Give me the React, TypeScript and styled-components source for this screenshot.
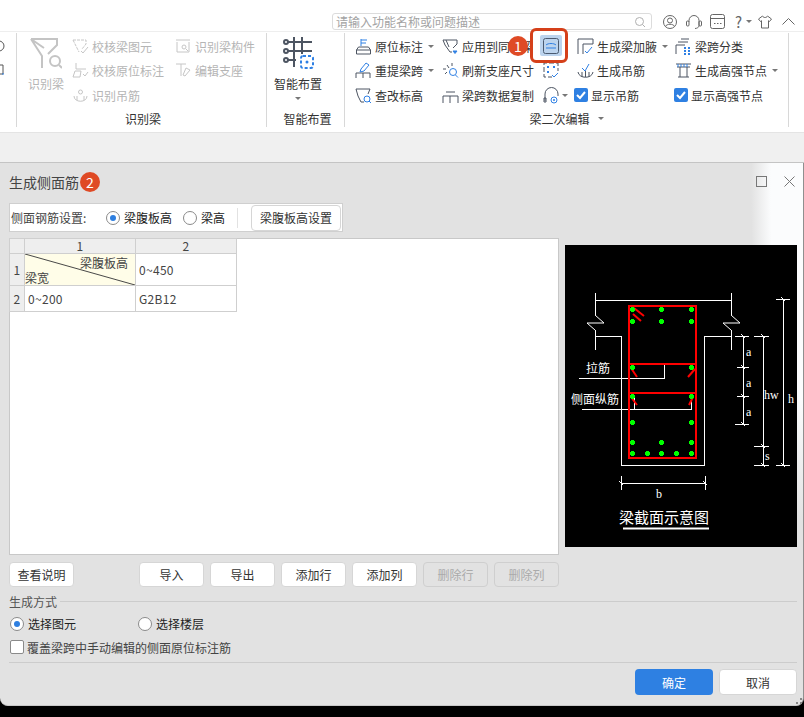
import React from "react";
import styled, { createGlobalStyle } from "styled-components";

const Global = createGlobalStyle`
  html, body { margin: 0; padding: 0; background: #000; }
  body { width: 804px; height: 717px; overflow: hidden; font-family: "Noto Sans CJK SC", "Noto Sans", sans-serif; font-size: 12px; color: #333; }
  * { box-sizing: border-box; }
`;

const Page = styled.div`
  width: 804px; height: 717px; display: flex; flex-direction: column; background: #000; overflow: hidden;
`;
const Ribbon = styled.div`
  height: 133px; background: #fff; border-bottom: 1px solid #e4e4e4; display: flex; flex-direction: column; flex: none;
`;
const TopBar = styled.div`
  height: 32px; border-bottom: 1px solid #eeeeee; display: flex; align-items: flex-start; padding: 13px 0 0 332px; flex: none;
`;
const Search = styled.div`
  width: 320px; height: 17px; border: 1px solid #dcdcdc; border-radius: 3px; display: flex; align-items: center; justify-content: space-between;
  padding: 0 5px 0 3px; color: #a3a3a3; font-size: 12px; line-height: 15px;
`;
const TopIcons = styled.div`
  display: flex; align-items: center; height: 17px; color: #666;
`;
const TopIcon = styled.svg<{ $ml: number }>`
  margin-left: ${p => p.$ml}px; flex: none; fill: none; stroke: #666;
`;
const Help = styled.span`
  margin-left: 10px; width: 9px; font-size: 15px; line-height: 16px; color: #666;
`;
const Groups = styled.div`
  flex: 1; display: flex; padding-top: 1px;
`;
const Group = styled.div<{ $w: number }>`
  width: ${p => p.$w}px; height: 94px; border-right: 1px solid #d8d8d8; display: flex; flex-direction: column; position: relative; flex: none;
`;
const GroupBody = styled.div<{ $left?: number }>`
  height: 77px; flex: none; display: flex; padding: 1px 0 0 ${p => p.$left ?? 0}px;
`;
const GroupTitle = styled.div<{ $pad?: number }>`
  flex: 1; display: flex; align-items: center; justify-content: center; gap: 6px; font-size: 12px; color: #333; padding-left: ${p => p.$pad ?? 0}px;
`;
const Col = styled.div<{ $w: number }>`
  width: ${p => p.$w}px; flex: none; display: flex; flex-direction: column;
`;
const Item = styled.div<{ $off?: boolean; $shift?: number }>`
  height: 24px; flex: none; display: flex; align-items: center; gap: 3px; white-space: nowrap; font-size: 12px;
  margin-left: ${p => p.$shift ?? 0}px;
  color: ${p => (p.$off ? "#b5b5b5" : "#333")};
  &:nth-child(3) { margin-top: 1px; }
`;
const Caret = styled.span`
  width: 0; height: 0; flex: none; margin-left: 2px; border-left: 3px solid transparent; border-right: 3px solid transparent; border-top: 3px solid #777;
`;
const BigCaret = styled(Caret)`
  margin: 5px 0 0 0;
`;
const EarCaret = styled(Caret)`
  margin-left: -1px;
`;
const BigTool = styled.div<{ $off?: boolean }>`
  display: flex; flex-direction: column; align-items: center; padding-top: 3px; color: ${p => (p.$off ? "#b5b5b5" : "#333")}; font-size: 12px; line-height: 16px;
  svg { flex: none; margin-bottom: 7px; }
`;
const Badge = styled.span`
  width: 20px; height: 20px; border-radius: 50%; background: #df4a25; color: #fff; font-size: 14px; line-height: 20px; text-align: center; display: inline-block; flex: none;
`;
const Badge1 = styled(Badge)`
  position: absolute; left: 163px; top: 3px;
`;
const Highlight = styled.div`
  position: absolute; left: 185px; top: -5px; width: 38px; height: 35px; border: 3px solid #d5401a; border-radius: 6px; background: #fff; display: flex; align-items: center; justify-content: center; padding-left: 4px;
`;
const HighlightFill = styled.div`
  width: 22px; height: 21px; background: #bcd4ee; border-radius: 2px; display: flex; align-items: center; justify-content: center;
`;
const Clip = styled.div`
  position: relative; height: 77px; flex: none;
`;
const Strip = styled.div`
  height: 30px; background: #f0f0f0; border-bottom: 1px solid #c4c4c4; flex: none;
`;
const Dialog = styled.div`
  height: 543px; padding: 0 9px 0 9px; border-radius: 0 0 8px 8px; display: flex; flex-direction: column; position: relative; flex: none; border-bottom: 1px solid #c8c8c8; border-right: 1px solid #8f8f8f;
  background:
    radial-gradient(ellipse 52px 330px at 803px 30px, #fbfcfd 62%, rgba(251, 252, 253, 0) 100%),
    #e2e2e2;
`;
const TitleRow = styled.div`
  height: 40px; flex: none; display: flex; align-items: center; gap: 1px; padding-bottom: 2px; font-size: 14px; color: #444;
`;
const WinBtns = styled.div`
  margin-left: auto; margin-right: -1px; display: flex; gap: 17px; align-items: center; margin-top: -1px;
`;
const SettingBar = styled.div`
  height: 29px; width: 334px; flex: none; background: #fff; border: 1px solid #cfcfcf; display: flex; align-items: center; padding-left: 1px; font-size: 12px; color: #333;
`;
const SettingLabel = styled.span`
  color: #444; width: 95px; flex: none;
`;
const Choice = styled.label<{ $w?: number }>`
  display: flex; align-items: center; gap: 4px; font-size: 12px; color: #222; width: ${p => (p.$w ? `${p.$w}px` : "auto")}; flex: none;
`;
const Radio = styled.span<{ $on?: boolean }>`
  width: 14px; height: 14px; border-radius: 50%; border: 1px solid #8a8a8a; background: #fff; display: flex; align-items: center; justify-content: center; flex: none;
  &::after { content: ""; width: 6px; height: 6px; border-radius: 50%; background: ${p => (p.$on ? "#2e7fe0" : "transparent")}; }
`;
const VSep = styled.span`
  width: 1px; height: 20px; background: #e2e2e2; margin: 0 13px 0 0; flex: none;
`;
const Btn = styled.button<{ $w: number; $off?: boolean }>`
  width: ${p => p.$w}px; height: 26px; padding: 0; font: inherit; font-size: 12px; flex: none; border-radius: 4px;
  background: ${p => (p.$off ? "transparent" : "#fff")}; border: 1px solid ${p => (p.$off ? "#cfcfcf" : "#d6d6d6")}; color: ${p => (p.$off ? "#aaa" : "#333")};
`;
const Content = styled.div`
  display: flex; margin-top: 6px; height: 317px; flex: none; gap: 6px;
`;
const GridPanel = styled.div`
  width: 550px; height: 317px; background: #fff; border: 1px solid #c8c8c8; flex: none;
`;
const Table = styled.table`
  border-collapse: collapse; table-layout: fixed; width: 227px; font-size: 12px; color: #444; margin-left: -1px; margin-top: -1px; letter-spacing: 0.3px;
  td, th { border: 1px solid #cfcfcf; padding: 0 3px; font-weight: 400; }
`;
const FirstCol = styled.col`
  width: 15px;
`;
const WideCol = styled.col`
  width: 111px;
`;
const LastCol = styled.col`
  width: 101px;
`;
const HeadCell = styled.th`
  background: #eeeeee; text-align: center; height: 15px; line-height: 14px; color: #444;
`;
const NumCell = styled.th`
  background: #eeeeee; text-align: center; padding: 0 !important;
`;
const DataCell = styled.td<{ $h: number }>`
  height: ${p => p.$h}px; color: #444;
`;
const DiagCell = styled.td`
  height: 32px; padding: 0 !important; background: #fffde8; position: relative; letter-spacing: 0;
`;
const DiagTop = styled.span`
  position: absolute; right: 7px; top: 0; line-height: 17px; color: #444;
`;
const DiagBottom = styled.span`
  position: absolute; left: 0; bottom: 0; line-height: 15px; color: #444;
`;
const DiagLine = styled.svg`
  position: absolute; inset: 0; width: 100%; height: 100%;
`;
const Picture = styled.svg`
  width: 232px; height: 302px; margin-top: 7px; background: #000; flex: none; display: block;
`;
const ActionRow = styled.div`
  display: flex; height: 25px; flex: none; margin-top: 7px; gap: 6px;
  button { height: 25px; }
`;
const Spacer = styled.div`
  width: 53px; flex: none;
`;
const Section = styled.div`
  display: flex; align-items: center; gap: 3px; margin-top: 5px; height: 18px; flex: none; color: #555; font-size: 12px;
  &::after { content: ""; flex: 1; height: 1px; background: #cccccc; margin-right: -3px; }
`;
const RadioRow = styled.div`
  display: flex; align-items: center; height: 23px; flex: none; margin-top: 2px; padding-left: 1px;
`;
const CheckRow = styled.div`
  display: flex; align-items: center; gap: 3px; height: 22px; flex: none; margin-top: 1px; padding-left: 1px; color: #444;
`;
const CheckBox = styled.span`
  width: 14px; height: 14px; border: 1px solid #8a8a8a; border-radius: 2px; background: #fff; flex: none;
`;
const Rule = styled.div`
  height: 1px; background: #cccccc; margin: 4px -3px 0 0; flex: none;
`;
const Footer = styled.div`
  display: flex; justify-content: flex-end; gap: 6px; margin-top: 6px; margin-right: -3px;
`;
const Primary = styled.button`
  width: 78px; height: 26px; border: 0; padding: 0; border-radius: 4px; background: #2e80e2; color: #fff; font: inherit; font-size: 12px;
`;
const Cancel = styled.button`
  width: 78px; height: 26px; border: 1px solid #d6d6d6; padding: 0; border-radius: 4px; background: #fff; color: #333; font: inherit; font-size: 12px;
`;
const Grip = styled.svg`
  position: absolute; right: 1px; bottom: 1px;
`;
const IconWrap = styled.span<{ $c?: string }>`
  display: flex; flex: none; color: ${p => p.$c ?? "#4d5562"};
`;
const EdgeGlyph = styled.div`
  height: 24px; display: flex; align-items: center;
`;
const BlueBox = styled.svg`
  flex: none;
`;

const gray = "#4d5562";
const blue = "#2f80e4";

const I = ({ children, off }: { children: React.ReactNode; off?: boolean }) => (
  <IconWrap $c={off ? "#c6c6c6" : gray}>
    <svg width="17" height="17" viewBox="0 0 17 17" fill="none" stroke="currentColor" strokeWidth="1">
      {children}
    </svg>
  </IconWrap>
);

const Ic = {
  mark: () => <I><path d="M6 1v7M6 2h6M6 5h5" stroke={blue} /><path d="M1.5 16v-4l2-3h10l2 3v4zM1.5 12h14" /></I>,
  apply: () => <I><path d="M1 2h14v4l-4 4M1 2l2 5 5 7h2" /><path d="M4 2l3 7" /><path stroke={blue} fill={blue} d="M11 13h4l-2 2.5z" /></I>,
  pen: () => <I><path d="M1 16v-5h14v5M8 16v-5" /><path stroke={blue} d="M5 10l1-3 5-6 3 2-5 6z" /></I>,
  refresh: () => <I><path d="M1 7h3M5 3l2 3M10 1v3M3 12l2-2" /><circle cx="11" cy="10" r="3.5" stroke={blue} /><path stroke={blue} d="M13.5 13l2.5 2.5" /></I>,
  chk: () => <I><path d="M1 2h14l-2 5M1 2l2 7 3 6h3" /><circle cx="12" cy="12" r="3" stroke={blue} /><path stroke={blue} d="M14 14l2 2" /></I>,
  span: () => <I><path d="M1 16V9h15v7M4 5h9M8 16V9" /></I>,
  haunch: () => <I><path d="M1 16V1h15v5H6v10" /><path stroke={blue} d="M8 13l2 2 5-6" /></I>,
  hang: () => <I><path d="M1 10c1 7 14 7 15 0M5 15v-5M12 15v-5M8.5 15V9" /><path stroke={blue} d="M5 6l3 3 4-7" /></I>,
  cls: () => <I><path d="M1 16V7h9M3 4h10M6 1h8" /><path stroke={blue} strokeWidth="2" d="M9 10h2M13 10h2M9 13h2M13 13h2M9 16h2M13 16h2" /></I>,
  high: () => <I><path d="M1 2h15M2 5h13" /><path d="M3 2v3M6 2v3M9 2v3M12 2v3" stroke={blue} /><path d="M5 15V5M12 15V5M3 15h11" /></I>,
  grid: () => <I><path d="M1 3V1h14v8M1 5v10h8" strokeDasharray="5 2" /><path stroke={blue} strokeWidth="2" d="M4 5h2M10 5h2M4 10h2" /><path stroke={blue} d="M9 13l2 2 4-4" /></I>,
  ear: () => <I><path d="M2 14V7a6 6 0 0 1 13 0v2" /><circle cx="11" cy="13" r="3" stroke={blue} /><circle cx="11" cy="13" r="1" fill={blue} stroke="none" /><path d="M1 11h2v4H1z" /></I>,
};

const Blue = () => (
  <BlueBox width="14" height="14" viewBox="0 0 14 14">
    <rect width="14" height="14" rx="2" fill="#2e80e2" />
    <path d="M3 7l3 3 5-6" fill="none" stroke="#fff" strokeWidth="2" />
  </BlueBox>
);

const DOTS: [number, number][] = [
  [632, 309], [661, 309], [691, 309], [632, 321], [661, 321], [691, 321],
  [632, 367], [691, 367], [632, 396], [691, 396], [632, 422], [691, 422],
  [632, 442], [661, 442], [691, 442], [632, 453], [647, 453], [661, 453], [676, 453], [691, 453],
];
const TICKS: [number, number][] = [
  [743, 336], [743, 367], [743, 396], [743, 424], [763, 336], [763, 446], [763, 465],
  [783, 299], [783, 465], [621, 483], [705, 483],
];
const LETTER = { fontFamily: "'Liberation Serif', serif", fontSize: 12 };

export default function App() {
  return (
    <Page>
      <Global />
      <Ribbon>
        <TopBar>
          <Search>
            <span>请输入功能名称或问题描述</span>
            <svg width="12" height="12" viewBox="0 0 12 12" fill="none" stroke="#b0b0b0"><circle cx="5.5" cy="5.5" r="4" /><path d="M8.5 8.5L11 11" /></svg>
          </Search>
          <TopIcons>
            <TopIcon $ml={11} width="14" height="14" viewBox="0 0 14 14"><circle cx="7" cy="7" r="6.5" /><circle cx="7" cy="5.5" r="2.5" /><path d="M2.5 11.5c1-3 8-3 9 0" /></TopIcon>
            <TopIcon $ml={9} width="16" height="16" viewBox="0 0 16 16"><path d="M3 8V6.5a5 5 0 0 1 10 0V12c0 1-2 2.5-4 2.5" /><rect x="0.5" y="7" width="2.5" height="5" rx="1" /><rect x="13" y="7" width="2.5" height="5" rx="1" /></TopIcon>
            <TopIcon $ml={8} width="15" height="15" viewBox="0 0 15 15"><rect x="0.5" y="0.5" width="14" height="14" rx="2" /><path d="M0.5 4.5h14M4 9.5h1.5M7 9.5h1.5M10 9.5h1.5" /></TopIcon>
            <Help>?</Help>
            <Caret />
            <TopIcon $ml={6} width="14" height="14" viewBox="0 0 14 14"><path d="M4.5 1L0.5 4l2 2.5 1-.8V13h7V5.7l1 .8 2-2.5-4-3c-1 2-4 2-5 0z" /></TopIcon>
            <TopIcon $ml={10} width="13" height="13" viewBox="0 0 13 13"><path d="M0.5 9.5l6-6 6 6" /></TopIcon>
          </TopIcons>
        </TopBar>
        <Groups>
          <Group $w={17}>
            <GroupBody>
              <Col $w={16}>
                <EdgeGlyph><svg width="6" height="12" viewBox="0 0 6 12" fill="none" stroke="#555"><circle cx="-1" cy="6" r="5" /></svg></EdgeGlyph>
                <EdgeGlyph><svg width="6" height="12" viewBox="0 0 6 12" fill="none" stroke="#555"><path d="M0 1h3v9H0" /><path d="M2 10h2" stroke={blue} /></svg></EdgeGlyph>
              </Col>
            </GroupBody>
          </Group>
          <Group $w={250}>
            <GroupBody $left={10}>
              <Col $w={38}>
                <BigTool $off>
                  <svg width="32" height="32" viewBox="0 0 32 32" fill="none" stroke="#c4c4c4" strokeWidth="2">
                    <path d="M1 2h26v6l-9 9M1 2l11 17v12M1 2l13 9" /><circle cx="25" cy="24" r="5" /><path d="M29 28l3 3" />
                  </svg>
                  <span>识别梁</span>
                </BigTool>
              </Col>
              <Col $w={110}>
                <Item $off $shift={7}><I off><path d="M1 2h13v4l-4 5M1 2l4 8 2 4" strokeDasharray="3 1" /><path d="M9 13l2 2 5-6" /></I><span>校核梁图元</span></Item>
                <Item $off $shift={7}><I off><path d="M4 1v6h10M1 15l2-6h6l-1 6zM11 12l2 2 3-4" /></I><span>校核原位标注</span></Item>
                <Item $off $shift={7}><I off><path d="M2 9c0 7 13 7 13 0M5 13V9M12 13V9" /><circle cx="8.5" cy="5" r="2" /></I><span>识别吊筋</span></Item>
              </Col>
              <Col $w={90}>
                <Item $off><I off><path d="M1 2h14M2 4v10h12V4" /><circle cx="9" cy="9" r="2" /><path d="M11 11l2 2" /></I><span>识别梁构件</span></Item>
                <Item $off><I off><path d="M1 2h10M6 2v12M11 6l4 2-5 6-2-1z" /></I><span>编辑支座</span></Item>
              </Col>
            </GroupBody>
            <GroupTitle $pad={3}>识别梁</GroupTitle>
          </Group>
          <Group $w={78}>
            <GroupBody $left={7}>
              <BigTool>
                <svg width="32" height="32" viewBox="0 0 32 32" fill="none" stroke="#4d5562" strokeWidth="2">
                  <circle cx="4" cy="5" r="2" /><circle cx="4" cy="14" r="2" /><circle cx="4" cy="23" r="2" />
                  <path d="M6 5h24M6 14h24M6 23h8M12 0v30M20 0v17" />
                  <rect x="19" y="19" width="12" height="12" rx="2" stroke={blue} strokeDasharray="3 2" />
                  <circle cx="25" cy="25" r="1.5" fill={blue} stroke="none" />
                </svg>
                <span>智能布置</span>
                <BigCaret />
              </BigTool>
            </GroupBody>
            <GroupTitle $pad={4}>智能布置</GroupTitle>
          </Group>
          <Group $w={444}>
            <Clip>
              <GroupBody $left={10}>
                <Col $w={87}>
                  <Item>{Ic.mark()}<span>原位标注</span><Caret /></Item>
                  <Item>{Ic.pen()}<span>重提梁跨</span><Caret /></Item>
                  <Item>{Ic.chk()}<span>查改标高</span></Item>
                </Col>
                <Col $w={101}>
                  <Item>{Ic.apply()}<span>应用到同名梁</span></Item>
                  <Item>{Ic.refresh()}<span>刷新支座尺寸</span></Item>
                  <Item>{Ic.span()}<span>梁跨数据复制</span></Item>
                </Col>
                <Col $w={34}>
                  <Item />
                  <Item>{Ic.grid()}</Item>
                  <Item>{Ic.ear()}<EarCaret /></Item>
                </Col>
                <Col $w={98}>
                  <Item>{Ic.haunch()}<span>生成梁加腋</span><Caret /></Item>
                  <Item>{Ic.hang()}<span>生成吊筋</span></Item>
                  <Item $shift={-3}><Blue /><span>显示吊筋</span></Item>
                </Col>
                <Col $w={110}>
                  <Item>{Ic.cls()}<span>梁跨分类</span></Item>
                  <Item>{Ic.high()}<span>生成高强节点</span><Caret /></Item>
                  <Item $shift={-1}><Blue /><span>显示高强节点</span></Item>
                </Col>
              </GroupBody>
              <Badge1>1</Badge1>
              <Highlight>
                <HighlightFill>
                  <svg width="16" height="16" viewBox="0 0 16 16" fill="none" stroke="#4a5a70"><rect x="0.5" y="0.5" width="15" height="15" rx="2" /><path d="M3 7c2-2 8-2 10 0M3 10h10" stroke={blue} /></svg>
                </HighlightFill>
              </Highlight>
            </Clip>
            <GroupTitle>梁二次编辑<Caret /></GroupTitle>
          </Group>
        </Groups>
      </Ribbon>
      <Strip />
      <Dialog>
        <TitleRow>
          <span>生成侧面筋</span>
          <Badge>2</Badge>
          <WinBtns>
            <svg width="11" height="11" viewBox="0 0 11 11" fill="none" stroke="#777"><rect x="0.5" y="0.5" width="10" height="10" /></svg>
            <svg width="11" height="11" viewBox="0 0 11 11" fill="none" stroke="#777"><path d="M0.5 0.5l10 10M10.5 0.5l-10 10" /></svg>
          </WinBtns>
        </TitleRow>
        <SettingBar>
          <SettingLabel>侧面钢筋设置:</SettingLabel>
          <Choice $w={77}><Radio $on /><span>梁腹板高</span></Choice>
          <Choice $w={54}><Radio /><span>梁高</span></Choice>
          <VSep />
          <Btn $w={90}>梁腹板高设置</Btn>
        </SettingBar>
        <Content>
          <GridPanel>
            <Table>
              <colgroup><FirstCol /><WideCol /><LastCol /></colgroup>
              <tbody>
                <tr><HeadCell /><HeadCell>1</HeadCell><HeadCell>2</HeadCell></tr>
                <tr>
                  <NumCell>1</NumCell>
                  <DiagCell>
                    <DiagLine viewBox="0 0 111 32" preserveAspectRatio="none"><path d="M0 0L111 32" stroke="#444" /></DiagLine>
                    <DiagTop>梁腹板高</DiagTop>
                    <DiagBottom>梁宽</DiagBottom>
                  </DiagCell>
                  <DataCell $h={32}>0~450</DataCell>
                </tr>
                <tr>
                  <NumCell>2</NumCell>
                  <DataCell $h={26}>0~200</DataCell>
                  <DataCell $h={26}>G2B12</DataCell>
                </tr>
              </tbody>
            </Table>
          </GridPanel>
          <Picture viewBox="565 245 232 302" fill="none" stroke="#fff" strokeWidth="1">
            <g shapeRendering="crispEdges">
              <path d="M595 300H731M595 293V300M731 293V300" />
              <path d="M595 336H621V465H704V336H731M595 330V350M731 330V350M595 300V315M731 300V315" />
              <path d="M579 378H664V365M582 409H691V397M634 397V409" />
              <path d="M743 336V424M735 336H749M737 367H749M737 396H749M735 424H749" />
              <path d="M763 336V465M754 336H769M754 446H769M754 465H769" />
              <path d="M783 299V465M776 299H790M776 465H790" />
              <path d="M621 476V490M705 476V490M621 483H705" />
            </g>
            <path d="M595 315L604 323H587L595 330M731 315L740 323H723L731 330" />
            <path d="M623 528.5H709" strokeWidth="2" />
            {TICKS.map(([x, y]) => <path key={`${x}-${y}`} d={`M${x - 2} ${y - 2}L${x + 2} ${y + 2}`} />)}
            <g stroke="#f00" strokeWidth="2">
              <rect x="629" y="306" width="67" height="152" />
              <path d="M629 364H696M629 393H696" />
              <path d="M634 308L644 316M633 314L641 321M631 368L637 377M688 377L695 369M631 397L637 405M689 405L693 397" />
            </g>
            <g fill="#0f0" stroke="none" shapeRendering="crispEdges">
              {DOTS.map(([x, y]) => (
                <path key={`${x}-${y}`} d={`M${x - 1} ${y - 2}h3v1h1v3h-1v1h-3v-1h-1v-3h1z`} />
              ))}
            </g>
            <g fill="#fff" stroke="none" fontSize="12" fontFamily="'Noto Sans CJK SC', sans-serif">
              <text x="586" y="373">拉筋</text>
              <text x="571" y="404">侧面纵筋</text>
              <text x="746" y="356" {...LETTER}>a</text>
              <text x="746" y="387" {...LETTER}>a</text>
              <text x="746" y="416" {...LETTER}>a</text>
              <text x="764" y="399" {...LETTER}>hw</text>
              <text x="765" y="460" {...LETTER}>s</text>
              <text x="788" y="403" {...LETTER}>h</text>
              <text x="656" y="498" {...LETTER}>b</text>
              <text x="619" y="523" fontSize="15">梁截面示意图</text>
            </g>
          </Picture>
        </Content>
        <ActionRow>
          <Btn $w={65}>查看说明</Btn>
          <Spacer />
          <Btn $w={65}>导入</Btn>
          <Btn $w={65}>导出</Btn>
          <Btn $w={65}>添加行</Btn>
          <Btn $w={65}>添加列</Btn>
          <Btn $w={65} $off>删除行</Btn>
          <Btn $w={65} $off>删除列</Btn>
        </ActionRow>
        <Section>生成方式</Section>
        <RadioRow>
          <Choice $w={128}><Radio $on /><span>选择图元</span></Choice>
          <Choice><Radio /><span>选择楼层</span></Choice>
        </RadioRow>
        <CheckRow><CheckBox /><span>覆盖梁跨中手动编辑的侧面原位标注筋</span></CheckRow>
        <Rule />
        <Footer>
          <Primary>确定</Primary>
          <Cancel>取消</Cancel>
        </Footer>
        <Grip width="6" height="6" viewBox="0 0 6 6" fill="#888"><rect x="4" y="0" width="2" height="2" /><rect x="0" y="4" width="2" height="2" /><rect x="4" y="4" width="2" height="2" /></Grip>
      </Dialog>
    </Page>
  );
}
